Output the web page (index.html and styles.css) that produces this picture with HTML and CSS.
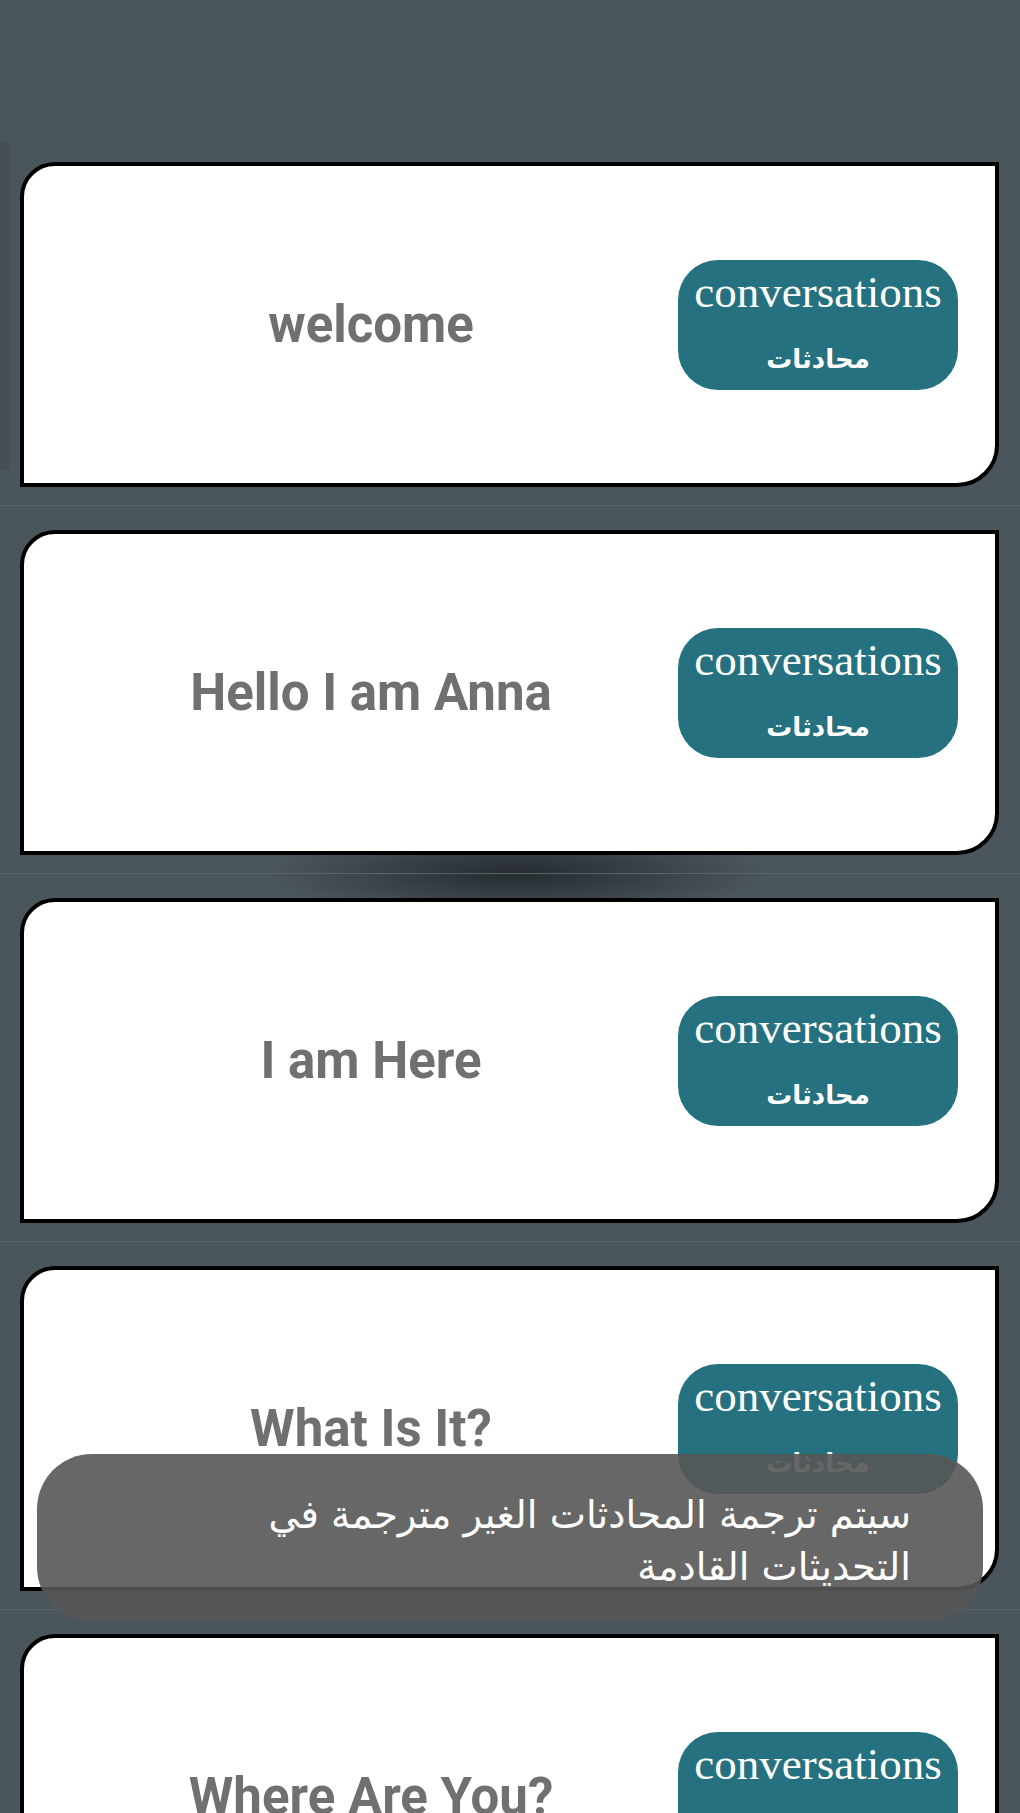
FILE: index.html
```html
<!DOCTYPE html>
<html lang="en">
<head>
<meta charset="utf-8">
<title>Conversations</title>
<link rel="stylesheet" href="styles.css">
</head>
<body>
<div class="screen">
  <div class="edge"></div>
  <div class="list">
    <div class="item">
      <div class="card">
        <div class="label">welcome</div>
        <div class="btn"><span class="en">conversations</span><span class="ar" lang="ar" dir="rtl">محادثات</span></div>
      </div>
    </div>
    <div class="item shade-bottom">
      <div class="card">
        <div class="label">Hello I am Anna</div>
        <div class="btn"><span class="en">conversations</span><span class="ar" lang="ar" dir="rtl">محادثات</span></div>
      </div>
    </div>
    <div class="item shade-top">
      <div class="card">
        <div class="label">I am Here</div>
        <div class="btn"><span class="en">conversations</span><span class="ar" lang="ar" dir="rtl">محادثات</span></div>
      </div>
    </div>
    <div class="item">
      <div class="card">
        <div class="label">What Is It?</div>
        <div class="btn"><span class="en">conversations</span><span class="ar" lang="ar" dir="rtl">محادثات</span></div>
      </div>
    </div>
    <div class="item">
      <div class="card">
        <div class="label">Where Are You?</div>
        <div class="btn"><span class="en">conversations</span><span class="ar" lang="ar" dir="rtl">محادثات</span></div>
      </div>
    </div>
  </div>
  <div class="toast" lang="ar" dir="rtl">سيتم ترجمة المحادثات الغير مترجمة في<br>التحديثات القادمة</div>
</div>
</body>
</html>
```
FILE: styles.css
```css
html, body {
  margin: 0;
  padding: 0;
}
body {
  background: #4b555c;
  font-family: Roboto, "Liberation Sans", sans-serif;
}
.screen {
  position: relative;
  height: 1813px;
  overflow: hidden;
}
.edge {
  position: absolute;
  left: 0;
  top: 142px;
  width: 10px;
  height: 328px;
  background: rgba(0, 0, 0, 0.07);
}
.list {
  padding-top: 138px;
}
.item {
  padding: 24px 21px 18px 20px;
  border-bottom: 1px solid #58626a;
}
.shade-bottom {
  background: radial-gradient(ellipse 250px 44px at 517px 100%, rgba(25, 30, 33, 0.75), rgba(25, 30, 33, 0) 100%);
}
.shade-top {
  background: radial-gradient(ellipse 250px 44px at 517px 0, rgba(25, 30, 33, 0.75), rgba(25, 30, 33, 0) 100%);
}
.card {
  box-sizing: border-box;
  height: 325px;
  border: 4px solid #000;
  border-radius: 35px 0 42px 0;
  background: #fff;
  display: flex;
  align-items: center;
}
.label {
  flex: 1;
  padding-left: 40px;
  text-align: center;
  font-family: Roboto, "Liberation Sans", sans-serif;
  font-weight: 700;
  font-size: 51px;
  color: #707070;
  white-space: nowrap;
}
.btn {
  box-sizing: border-box;
  width: 280px;
  height: 130px;
  margin-right: 37px;
  padding-top: 7px;
  border-radius: 40px;
  background: #26717f;
  display: flex;
  flex-direction: column;
  align-items: center;
  color: #fff;
}
.en {
  font-family: "Liberation Serif", "DejaVu Serif", serif;
  font-size: 45px;
  line-height: 50px;
}
.ar {
  margin-top: 27px;
  font-family: "DejaVu Sans", sans-serif;
  font-weight: 700;
  font-size: 26px;
  line-height: 30px;
}
.toast {
  position: absolute;
  left: 37px;
  top: 1454px;
  box-sizing: border-box;
  width: 946px;
  height: 168px;
  padding: 35px 72px 0 72px;
  border-radius: 55px;
  background: rgba(86, 86, 86, 0.9);
  color: #fff;
  font-family: "DejaVu Sans", sans-serif;
  font-size: 38.5px;
  line-height: 52px;
  text-align: right;
}
```
